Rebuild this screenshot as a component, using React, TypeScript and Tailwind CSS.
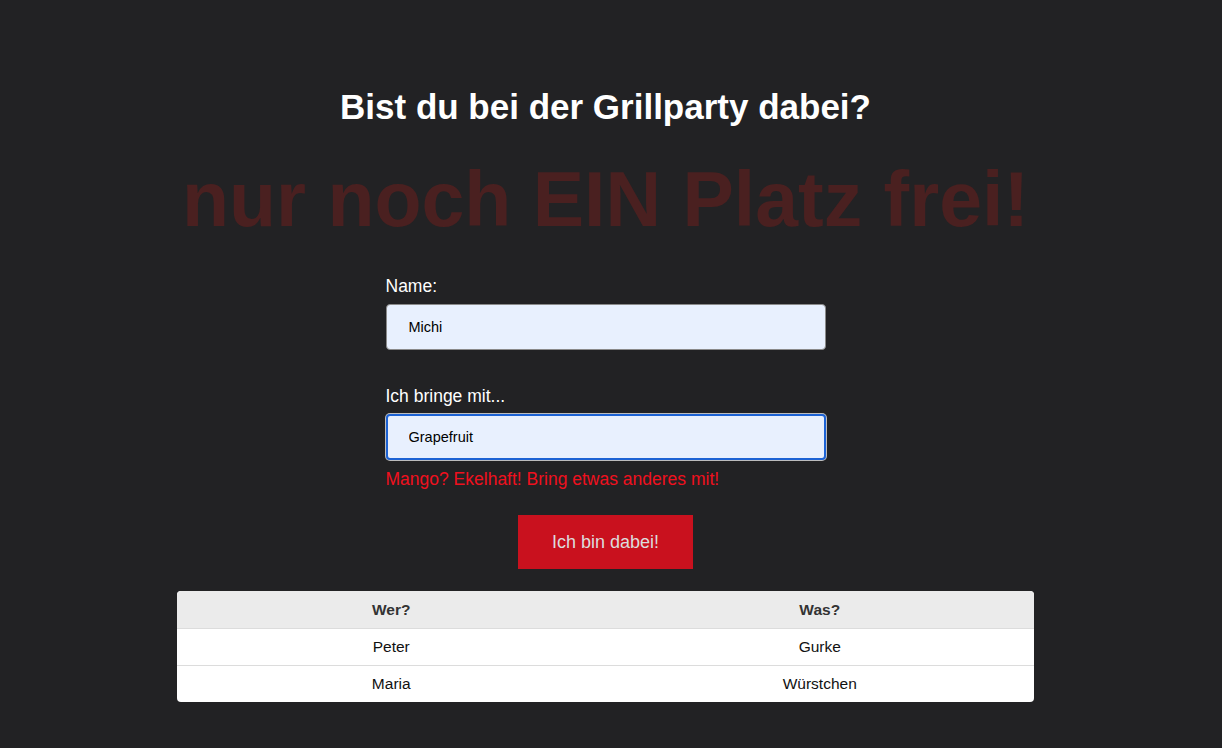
import * as React from "react"

const guests = [
    { who: "Peter", what: "Gurke" },
    { who: "Maria", what: "Würstchen" },
]

export default function App() {
    return (
        <div className="min-h-[748px] bg-[#222224] font-['Liberation_Sans',Arial,sans-serif] pr-[11px]">
            <div className="flex flex-col items-center pt-[86px]">
                <h1 className="text-[35px] leading-[42px] font-bold text-white">Bist du bei der Grillparty dabei?</h1>
                <p className="mt-[26px] text-[77px] leading-[90px] font-bold text-[#4a2020]">nur noch EIN Platz frei!</p>

                <form className="w-[440px] mt-[30px] flex flex-col" onSubmit={(e) => e.preventDefault()}>
                    <label className="text-[17.5px] leading-[24px] text-white">Name:</label>
                    <input
                        defaultValue="Michi"
                        className="mt-[6px] h-[46px] rounded-[4px] border border-[#8a8a8a] bg-[#e8f0fe] px-[22px] text-[14.5px] text-black outline-none"
                    />

                    <label className="mt-[34px] text-[17.5px] leading-[24px] text-white">Ich bringe mit...</label>
                    <input
                        defaultValue="Grapefruit"
                        className="mt-[6px] h-[46px] rounded-[4px] border-2 border-[#1c62d4] bg-[#e8f0fe] px-[21px] text-[14.5px] text-black outline-none ring-1 ring-white/70"
                    />
                    <p className="mt-[7px] text-[17.5px] leading-[24px] text-[#f0101e]">Mango? Ekelhaft! Bring etwas anderes mit!</p>

                    <button
                        type="submit"
                        className="self-center mt-[24px] w-[175px] h-[54px] bg-[#c9111e] text-[18px] text-[#dcdcdc]"
                    >
                        Ich bin dabei!
                    </button>
                </form>

                <div className="w-[857px] mt-[22px] rounded-[4px] overflow-hidden bg-white">
                    <table className="w-full border-collapse text-[15.5px]">
                        <thead>
                            <tr className="bg-[#ebebeb] h-[37px]">
                                <th className="w-1/2 font-bold text-[#333]">Wer?</th>
                                <th className="w-1/2 font-bold text-[#333]">Was?</th>
                            </tr>
                        </thead>
                        <tbody>
                            {guests.map((g) => (
                                <tr key={g.who} className="h-[37px] border-t border-[#dcdcdc] text-[#111]">
                                    <td className="text-center">{g.who}</td>
                                    <td className="text-center">{g.what}</td>
                                </tr>
                            ))}
                        </tbody>
                    </table>
                </div>
            </div>
        </div>
    )
}
